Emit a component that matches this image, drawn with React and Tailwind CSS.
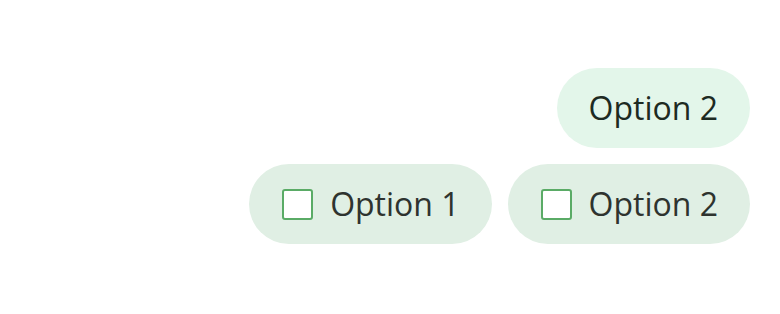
export default function App() {
  const font = { fontFamily: '"Open Sans", "Noto Sans", sans-serif' };
  return (
    <div className="w-[780px] h-[314px] bg-white flex flex-col items-end pt-[68px] pr-[30px] gap-4" style={font}>
      <div className="h-20 rounded-full bg-[#e3f6ea] px-8 flex items-center text-[32px] text-[#1d2a22]">Option 2</div>
      <div className="flex gap-4">
        {["Option 1", "Option 2"].map((t) => (
          <div key={t} className="h-20 rounded-full bg-[#e0efe4] pl-[33px] pr-8 flex items-center gap-[17px] text-[32px] text-[#2e332f]">
            <span className="w-[31px] h-[31px] rounded-[3px] border-2 border-[#5aab66] bg-white" />
            <span>{t}</span>
          </div>
        ))}
      </div>
    </div>
  );
}
